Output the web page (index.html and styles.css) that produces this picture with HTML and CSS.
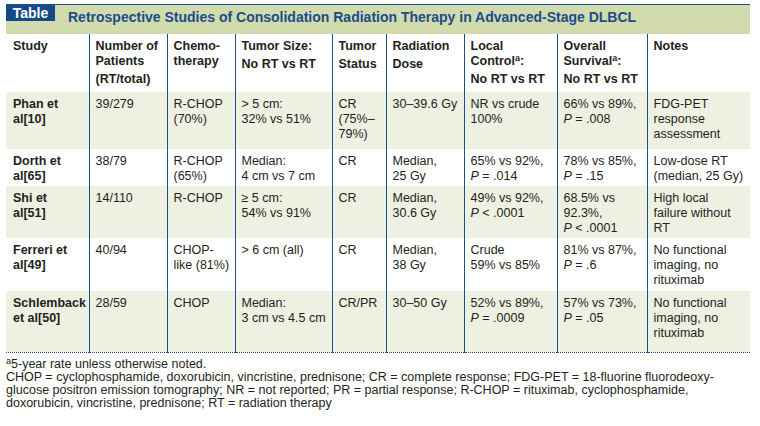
FILE: index.html
```html
<!DOCTYPE html>
<html lang="en">
<head>
<meta charset="utf-8">
<title>Retrospective Studies of Consolidation Radiation Therapy in Advanced-Stage DLBCL</title>
<link rel="stylesheet" href="styles.css">
</head>
<body>
<div class="page">
  <div class="caption">
    <div class="tag">Table</div>
    <div class="title">Retrospective Studies of Consolidation Radiation Therapy in Advanced-Stage DLBCL</div>
  </div>
  <table class="grid">
    <colgroup>
      <col class="c1"><col class="c2"><col class="c3"><col class="c4"><col class="c5"><col class="c6"><col class="c7"><col class="c8"><col class="c9">
    </colgroup>
    <thead>
      <tr class="head">
        <th>Study</th>
        <th>Number of<br>Patients<span class="gap">(RT/total)</span></th>
        <th>Chemo-<br>therapy</th>
        <th>Tumor Size:<span class="gap">No RT vs RT</span></th>
        <th>Tumor<span class="gap">Status</span></th>
        <th>Radiation<span class="gap">Dose</span></th>
        <th>Local<br>Control<span class="sup">a</span>:<span class="gap">No RT vs RT</span></th>
        <th>Overall<br>Survival<span class="sup">a</span>:<span class="gap">No RT vs RT</span></th>
        <th>Notes</th>
      </tr>
    </thead>
    <tbody>
      <tr class="alt r1">
        <td class="study">Phan et<br>al[10]</td>
        <td>39/279</td>
        <td>R-CHOP<br>(70%)</td>
        <td>&gt; 5 cm:<br>32% vs 51%</td>
        <td>CR<br>(75%–<br>79%)</td>
        <td>30–39.6 Gy</td>
        <td>NR vs crude<br>100%</td>
        <td>66% vs 89%,<br><i>P</i> = .008</td>
        <td>FDG-PET<br>response<br>assessment</td>
      </tr>
      <tr class="r2">
        <td class="study">Dorth et<br>al[65]</td>
        <td>38/79</td>
        <td>R-CHOP<br>(65%)</td>
        <td>Median:<br>4 cm vs 7 cm</td>
        <td>CR</td>
        <td>Median,<br>25 Gy</td>
        <td>65% vs 92%,<br><i>P</i> = .014</td>
        <td>78% vs 85%,<br><i>P</i> = .15</td>
        <td>Low-dose RT<br>(median, 25 Gy)</td>
      </tr>
      <tr class="alt r3">
        <td class="study">Shi et<br>al[51]</td>
        <td>14/110</td>
        <td>R-CHOP</td>
        <td>≥ 5 cm:<br>54% vs 91%</td>
        <td>CR</td>
        <td>Median,<br>30.6 Gy</td>
        <td>49% vs 92%,<br><i>P</i> &lt; .0001</td>
        <td>68.5% vs<br>92.3%,<br><i>P</i> &lt; .0001</td>
        <td>High local<br>failure without<br>RT</td>
      </tr>
      <tr class="r4">
        <td class="study">Ferreri et<br>al[49]</td>
        <td>40/94</td>
        <td>CHOP-<br>like (81%)</td>
        <td>&gt; 6 cm (all)</td>
        <td>CR</td>
        <td>Median,<br>38 Gy</td>
        <td>Crude<br>59% vs 85%</td>
        <td>81% vs 87%,<br><i>P</i> = .6</td>
        <td>No functional<br>imaging, no<br>rituximab</td>
      </tr>
      <tr class="alt r5 last">
        <td class="study">Schlemback<br>et al[50]</td>
        <td>28/59</td>
        <td>CHOP</td>
        <td>Median:<br>3 cm vs 4.5 cm</td>
        <td>CR/PR</td>
        <td>30–50 Gy</td>
        <td>52% vs 89%,<br><i>P</i> = .0009</td>
        <td>57% vs 73%,<br><i>P</i> = .05</td>
        <td>No functional<br>imaging, no<br>rituximab</td>
      </tr>
    </tbody>
  </table>
  <div class="notes">
    <span class="sup">a</span>5-year rate unless otherwise noted.<br>
    CHOP = cyclophosphamide, doxorubicin, vincristine, prednisone; CR = complete response; FDG-PET = 18-fluorine fluorodeoxy-<br>
    glucose positron emission tomography; NR = not reported; PR = partial response; R-CHOP = rituximab, cyclophosphamide,<br>
    doxorubicin, vincristine, prednisone; RT = radiation therapy
  </div>
</div>
</body>
</html>
```

FILE: styles.css
```css
html, body {
  margin: 0;
  padding: 0;
  background: #ffffff;
}

body {
  font-family: "Liberation Sans", Arial, sans-serif;
  color: #231f20;
}

.page {
  width: 744px;
  padding: 4px 0 0 6px;
}

.caption {
  display: flex;
  align-items: flex-start;
  height: 29px;
  background: #d2dbac;
  border-top: 1px solid #1c4e8d;
}

.tag {
  width: 49px;
  height: 16px;
  line-height: 16px;
  background: #164987;
  color: #ffffff;
  font-weight: bold;
  font-size: 14px;
  text-align: center;
}

.title {
  margin-left: 13px;
  padding-top: 4px;
  line-height: 16px;
  font-size: 14px;
  font-weight: bold;
  color: #1a4c8c;
  white-space: nowrap;
}

.grid {
  width: 744px;
  border-collapse: collapse;
  table-layout: fixed;
}

.c1 { width: 83px; }
.c2 { width: 78px; }
.c3 { width: 68px; }
.c4 { width: 97px; }
.c5 { width: 54px; }
.c6 { width: 78px; }
.c7 { width: 93px; }
.c8 { width: 90px; }
.c9 { width: 103px; }

.grid th,
.grid td {
  vertical-align: top;
  text-align: left;
  padding: 4.5px 0 0 6px;
  border-left: 1px solid #1c4e8d;
  font-size: 12.5px;
  line-height: 15px;
  white-space: nowrap;
}

.grid th:first-child,
.grid td:first-child {
  border-left: none;
  padding-left: 7px;
}

.grid th {
  font-weight: bold;
  padding-top: 5px;
}

.head { height: 58px; }
.r1 { height: 57px; }
.r2 { height: 37px; }
.r3 { height: 52px; }
.r4 { height: 53px; }
.r5 { height: 61px; }

.alt td {
  background: #eef0e1;
}

.last td {
  border-bottom: 1px dotted #1c4e8d;
}

.study {
  font-weight: bold;
}

.gap {
  display: block;
  margin-top: 3px;
}

.sup {
  font-size: 9px;
  vertical-align: 4px;
  line-height: 0;
}

.notes {
  padding-top: 5px;
  font-size: 12.5px;
  line-height: 13.3px;
  white-space: nowrap;
}
```
